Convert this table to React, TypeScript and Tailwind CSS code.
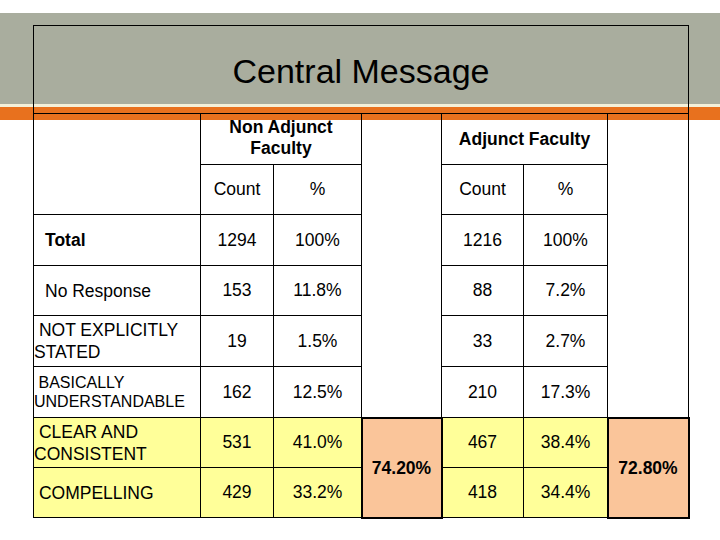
import React from 'react';

const font = "font-['Liberation_Sans',Arial,sans-serif]";

const rows = [
  { label: 'Total', bold: true, indent: true, a: ['1294', '100%'], b: ['1216', '100%'] },
  { label: 'No Response', indent: true, a: ['153', '11.8%'], b: ['88', '7.2%'] },
  { label: ' NOT EXPLICITLY STATED', a: ['19', '1.5%'], b: ['33', '2.7%'] },
  { label: ' BASICALLY UNDERSTANDABLE', small: true, a: ['162', '12.5%'], b: ['210', '17.3%'] },
  { label: ' CLEAR AND CONSISTENT', yellow: true, a: ['531', '41.0%'], b: ['467', '38.4%'] },
  { label: ' COMPELLING', yellow: true, a: ['429', '33.2%'], b: ['418', '34.4%'] },
];

const rowStart = ['row-start-3', 'row-start-4', 'row-start-5', 'row-start-6', 'row-start-7', 'row-start-8'];

function Cell({ className = '', children }: { className?: string; children?: React.ReactNode }) {
  return (
    <div className={`flex items-center justify-center border-r border-b border-black text-center ${className}`}>
      {children}
    </div>
  );
}

export default function App() {
  return (
    <div
      className={`w-[720px] h-[540px] overflow-hidden text-black ${font} bg-[linear-gradient(to_bottom,#ffffff_0_13px,#a9ad9e_13px_104px,#f3f0da_104px_107px,#e8711e_107px_120px,#ffffff_120px)]`}
    >
      <div className="pt-[25px] pl-[33px]">
        {/* title box */}
        <div className="w-[656px] h-[89px] border border-black flex items-center justify-center pt-[2px]">
          <h1 className="text-[34px] leading-none">Central Message</h1>
        </div>

        {/* table */}
        <div className="w-[656px] border-l border-black grid grid-cols-[167px_73px_88px_80px_82px_84px_81px] grid-rows-[51px_50px_51px_50px_51px_51px_50px_50px] text-[17.5px]">
          <Cell className="col-start-1 row-start-1 row-span-2" />
          <Cell className="col-start-2 row-start-1 col-span-2 font-bold leading-[21px] pb-[2px]">
            Non Adjunct
            <br />
            Faculty
          </Cell>
          <Cell className="col-start-4 row-start-1 row-span-6" />
          <Cell className="col-start-5 row-start-1 col-span-2 font-bold">Adjunct Faculty</Cell>
          <Cell className="col-start-7 row-start-1 row-span-6" />

          <Cell className="col-start-2 row-start-2">Count</Cell>
          <Cell className="col-start-3 row-start-2">%</Cell>
          <Cell className="col-start-5 row-start-2">Count</Cell>
          <Cell className="col-start-6 row-start-2">%</Cell>

          {rows.map((r, i) => {
            const bg = r.yellow ? 'bg-[#ffff99]' : '';
            return (
              <React.Fragment key={r.label}>
                <div
                  className={`col-start-1 ${rowStart[i]} border-r border-b border-black flex items-center whitespace-pre-wrap ${bg} ${
                    r.indent ? 'pl-[11px]' : 'pl-0'
                  } ${r.bold ? 'font-bold' : ''} ${r.small ? 'text-[16px] leading-[19px]' : 'leading-[22px]'}`}
                >
                  {r.label}
                </div>
                <Cell className={`col-start-2 ${rowStart[i]} ${bg}`}>{r.a[0]}</Cell>
                <Cell className={`col-start-3 ${rowStart[i]} ${bg}`}>{r.a[1]}</Cell>
                <Cell className={`col-start-5 ${rowStart[i]} ${bg}`}>{r.b[0]}</Cell>
                <Cell className={`col-start-6 ${rowStart[i]} ${bg}`}>{r.b[1]}</Cell>
              </React.Fragment>
            );
          })}

          <Cell className="col-start-4 row-start-7 row-span-2 bg-[#fac59a] font-bold relative z-10 shadow-[0_0_0_1px_#000,inset_1px_1px_0_0_#000] pt-[2px]">
            74.20%
          </Cell>
          <Cell className="col-start-7 row-start-7 row-span-2 bg-[#fac59a] font-bold relative z-10 shadow-[0_0_0_1px_#000,inset_1px_1px_0_0_#000] pt-[2px]">
            72.80%
          </Cell>
        </div>
      </div>
    </div>
  );
}
